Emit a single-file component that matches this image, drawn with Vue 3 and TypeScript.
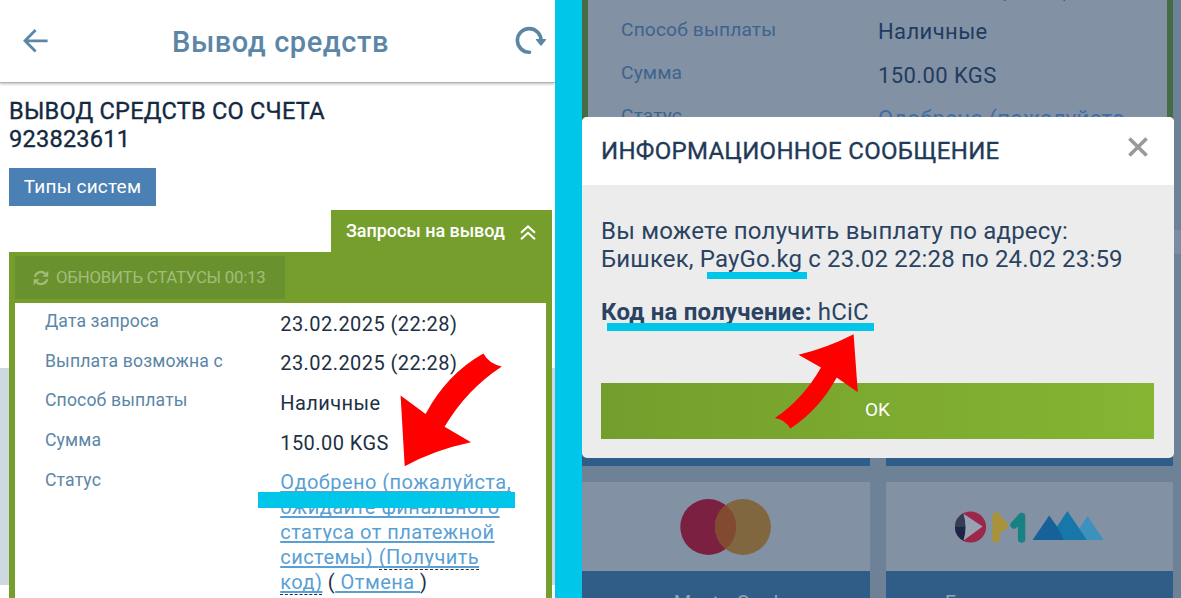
<script setup lang="ts">
interface Row {
  label: string
  value: string
}

const requestRows: Row[] = [
  { label: 'Дата запроса', value: '23.02.2025 (22:28)' },
  { label: 'Выплата возможна с', value: '23.02.2025 (22:28)' },
  { label: 'Способ выплаты', value: 'Наличные' },
  { label: 'Сумма', value: '150.00 KGS' },
]

const backdropRows: Row[] = [
  { label: 'Выплата возможна с', value: '23.02.2025 (22:28)' },
  { label: 'Способ выплаты', value: 'Наличные' },
  { label: 'Сумма', value: '150.00 KGS' },
]
</script>

<template>
  <main class="stage">
    <section class="phone">
      <header class="bar">
        <svg class="back" width="26" height="26" viewBox="0 0 26 26">
          <path d="M12.6 2 L2 12.8 L12.6 23.6 M2 12.8 H24.6" fill="none" stroke="#5b86a6" stroke-width="2.8" />
        </svg>
        <h1 class="bar-title">Вывод средств</h1>
        <svg class="reload" width="34" height="32" viewBox="0 0 34 32">
          <path d="M15.5 27.2 A11.8 11.8 0 1 1 27 15.8" fill="none" stroke="#5b86a6" stroke-width="3.6" stroke-linecap="round" />
          <path d="M22.6 14.6 H31.4 L27 20 Z" fill="#5b86a6" stroke="#5b86a6" stroke-width="1.4" stroke-linejoin="round" />
        </svg>
      </header>

      <h2 class="account">ВЫВОД СРЕДСТВ СО СЧЕТА<br />923823611</h2>
      <button class="types">Типы систем</button>

      <div class="tab-line">
        <div class="tab">
          <span class="tab-text">Запросы на вывод</span>
          <svg class="chevrons" width="18" height="17" viewBox="0 0 18 17">
            <path d="M2 8.8 L9 2.4 L16 8.8 M2 15.2 L9 8.8 L16 15.2" fill="none" stroke="#fff" stroke-width="2.1" />
          </svg>
        </div>
      </div>

      <div class="track">
        <div class="requests">
          <div class="refresh">
            <svg width="16" height="16" viewBox="0 0 16 16">
              <path d="M1.8 6.8 A6.2 6.2 0 0 1 12.3 3.8 M14.2 9.2 A6.2 6.2 0 0 1 3.7 12.2" fill="none" stroke="#a3bc7c" stroke-width="2.1" />
              <path d="M15.3 0.8 V6.8 H9.3 Z M0.7 15.2 V9.2 H6.7 Z" fill="#a3bc7c" />
            </svg>
            <span class="refresh-text">ОБНОВИТЬ СТАТУСЫ 00:13</span>
          </div>
          <div class="sheet">
            <div v-for="row in requestRows" :key="row.label" class="row">
              <span class="label">{{ row.label }}</span>
              <span class="value">{{ row.value }}</span>
            </div>
            <div class="row">
              <span class="label">Статус</span>
              <span class="value status"><a>Одобрено (пожалуйста,<br />ожидайте финального<br />статуса от платежной<br />системы) </a><a class="dashed">(Получить<br />код)</a> (<a> Отмена </a>)</span>
            </div>
          </div>
        </div>
      </div>

      <div class="marker status-marker"></div>
      <svg class="arrow arrow-status" width="104" height="116" viewBox="400 352 104 116">
        <path d="M404.7 466.2 L400.6 395.6 L425.6 414 Q447 374 483.4 353.6 Q489 364 501.8 366.4 Q466 390 444.6 426.8 L471 442.2 Q434 450 404.7 466.2 Z" fill="#fe0000" />
      </svg>
    </section>

    <div class="divider"></div>

    <section class="phone dimmed">
      <div class="back-sheet">
        <div v-for="row in backdropRows" :key="row.label" class="back-row">
          <span class="back-label">{{ row.label }}</span>
          <span class="back-value">{{ row.value }}</span>
        </div>
        <div class="back-row">
          <span class="back-label">Статус</span>
          <span class="back-value back-link">Одобрено (пожалуйста,</span>
        </div>
      </div>
      <div class="edge"></div>

      <div class="tiles">
        <div class="tile-foot"></div>
        <div class="tile-foot"></div>
        <div class="tile">
          <div class="logo">
            <svg width="94" height="58" viewBox="0.5 0 94 58">
              <circle cx="29.8" cy="29" r="28" fill="#7b2041" />
              <circle cx="64.4" cy="29" r="28" fill="#806740" />
              <path d="M47.1 7 A28 28 0 0 1 47.1 51 A28 28 0 0 1 47.1 7 Z" fill="#814a31" />
            </svg>
          </div>
          <div class="caption">MasterCard</div>
        </div>
        <div class="tile">
          <div class="logo">
            <svg width="152" height="36" viewBox="954 509 152 36">
              <circle cx="970.5" cy="527" r="15.6" fill="#9c2748" />
              <path d="M964 513 A15.6 15.6 0 0 0 955 527 H966 Z" fill="#343c56" />
              <path d="M955 527 A15.6 15.6 0 0 0 964 541 L966 527 Z" fill="#1c2546" />
              <path d="M963.5 513.8 L982.6 526.5 L963.5 540.6 Q967.6 527 963.5 513.8 Z" fill="#98a2b4" />
              <path d="M996 539 V516 L1004.4 525.4 L998 530" fill="none" stroke="#a8933a" stroke-width="7.4" stroke-linecap="round" stroke-linejoin="round" />
              <path d="M1021.6 539 V516.4 L1014 525" fill="none" stroke="#178183" stroke-width="7.4" stroke-linecap="round" stroke-linejoin="round" />
              <path d="M1072 540 L1087.4 516 L1103.6 540 Z" fill="#3c92bd" />
              <path d="M1048 540 L1067.4 511 L1087 540 Z" fill="#1777ab" />
              <path d="M1032.6 540 L1049.2 515.6 L1057 526.5 L1064 540 Z" fill="#17619b" />
            </svg>
          </div>
          <div class="caption">Банковская карта</div>
        </div>
      </div>

      <div class="modal">
        <div class="modal-head">
          <h3 class="modal-title">ИНФОРМАЦИОННОЕ СООБЩЕНИЕ</h3>
          <svg class="close" width="20" height="20" viewBox="0 0 20 20">
            <path d="M1.4 1.4 L18.6 18.6 M18.6 1.4 L1.4 18.6" stroke="#999" stroke-width="3.6" />
          </svg>
        </div>
        <div class="modal-body">
          <p class="message"><span>Вы можете получить выплату по адресу:</span><br /><span class="line-two">Бишкек, PayGo.kg с 23.02 22:28 по 24.02 23:59</span></p>
          <p class="message code"><b>Код на получение:</b> hCiC</p>
          <button class="ok">OK</button>
        </div>
      </div>

      <div class="marker pay-marker"></div>
      <div class="marker code-marker"></div>
      <svg class="arrow arrow-code" width="86" height="98" viewBox="774 332 86 98">
        <path d="M853.6 334.2 L857.8 392.2 L836.7 377.6 Q819 410 790.3 428.6 Q785 419.5 774.8 418 Q803 399 821 367.4 L798.4 354.8 Q828 347.5 853.6 334.2 Z" fill="#fe0000" />
      </svg>
    </section>
  </main>
</template>

<style>
body {
  margin: 0;
  overflow: hidden;
}
</style>

<style scoped>
.stage {
  display: flex;
  width: 1181px;
  height: 598px;
  overflow: hidden;
  background: #fff;
  font-family: Roboto, "Noto Sans", sans-serif;
}
h1, h2, h3, p { margin: 0; }
button { border: 0; padding: 0; font-family: inherit; display: block; }
svg { display: block; flex: none; }
.phone {
  position: relative;
  width: 555px;
  height: 598px;
  overflow: hidden;
  flex: none;
}
.bar {
  height: 82px;
  display: flex;
  align-items: center;
  border-bottom: 1px solid #b4b4b4;
  box-shadow: 0 1px 3px #bbb;
}
.back { margin: 0 0 1px 23px; }
.bar-title {
  width: 222px;
  margin-left: 123px;
  padding-top: 1px;
  font-size: 29px;
  line-height: 40px;
  font-weight: 500;
  letter-spacing: 0.58px;
  color: #5b86a6;
  white-space: nowrap;
}
.reload { margin-left: 120px; margin-bottom: 1px; }
.account {
  margin: 14px 0 0 9px;
  font-size: 23.6px;
  line-height: 28px;
  font-weight: 400;
  letter-spacing: 0.21px;
  color: #14293f;
  -webkit-text-stroke: 0.35px #14293f;
}
.types {
  width: 147px;
  height: 38px;
  margin: 15px 0 0 9px;
  background: #4a80b3;
  color: #fff;
  font-size: 19px;
  line-height: 38px;
  letter-spacing: 0.2px;
}
.tab-line {
  display: flex;
  justify-content: flex-end;
  margin: 4px 3px 0 0;
}
.tab {
  width: 221px;
  height: 42px;
  box-sizing: border-box;
  padding: 0 15px;
  display: flex;
  align-items: center;
  justify-content: space-between;
  background: #759e2d;
}
.tab-text {
  color: #fff;
  font-size: 18px;
  font-weight: 500;
  line-height: 40px;
  letter-spacing: -0.05px;
  padding-bottom: 1px;
}
.chevrons { margin-top: 2px; }
.track {
  padding: 0 3px 0 9px;
  background: linear-gradient(#cdd8df, #cdd8df) 0 116px / 100% 217px no-repeat;
}
.requests {
  height: 346px;
  box-sizing: border-box;
  padding: 4px 6px 0;
  background: #759e2d;
}
.refresh {
  width: 270px;
  height: 43px;
  box-sizing: border-box;
  padding-left: 18px;
  display: flex;
  align-items: center;
  gap: 7px;
  background: #69922f;
}
.refresh-text {
  font-size: 16.8px;
  line-height: 41px;
  padding-bottom: 1px;
  letter-spacing: -0.22px;
  color: #a3bc7c;
  white-space: nowrap;
}
.sheet {
  height: 295px;
  margin-top: 4px;
  box-sizing: border-box;
  padding: 6px 0 0 30px;
  background: #fff;
}
.row {
  display: grid;
  grid-template-columns: 235.2px 1fr;
  height: 39.7px;
}
.label {
  font-size: 17.6px;
  line-height: 24px;
  letter-spacing: 0.14px;
  color: #5b86a6;
}
.value {
  padding-top: 2.6px;
  font-size: 20px;
  line-height: 24.8px;
  letter-spacing: 0.45px;
  color: #1d3044;
  white-space: nowrap;
}
.status { letter-spacing: 0.47px; }
.status a {
  color: #5a9fd4;
  text-decoration: underline;
  text-decoration-thickness: 1.5px;
  text-underline-offset: 2px;
  text-decoration-skip-ink: none;
}
.status .dashed {
  border-bottom: 1px dashed #1d3044;
}
.marker { position: absolute; background: #00c7ea; }
.arrow { position: absolute; }
.status-marker { left: 258px; top: 492px; width: 257px; height: 16px; }
.arrow-status { left: 400px; top: 352px; }
.divider { width: 27px; flex: none; background: #00c7ea; }

.dimmed { width: 599px; background: #6d8297; }
.back-sheet {
  width: 591px;
  height: 300px;
  margin-top: -27px;
  box-sizing: border-box;
  padding-left: 33px;
  border: solid #466c45;
  border-width: 0 6px;
  background: #8391a4;
}
.back-row {
  display: grid;
  grid-template-columns: 257px 1fr;
  height: 43.3px;
}
.back-label {
  padding-top: 0.4px;
  font-size: 19.2px;
  line-height: 26px;
  letter-spacing: 0.14px;
  color: #3d648c;
}
.back-value {
  padding-top: 3px;
  font-size: 22px;
  line-height: 26px;
  letter-spacing: 0.4px;
  color: #1f3c60;
  white-space: nowrap;
}
.back-value.back-link { color: #3c6ea6; }
.edge {
  position: absolute;
  left: 591px;
  top: 230px;
  width: 8px;
  height: 24px;
  background: #7b8ca2;
}
.tiles {
  display: grid;
  grid-template-columns: 288px 287px;
  column-gap: 16px;
  margin-top: 179px;
}
.tile-foot { height: 14px; background: #2f5d87; margin-bottom: 16px; }
.logo {
  height: 89px;
  display: flex;
  justify-content: center;
  align-items: center;
  background: #8391a4;
}
.caption {
  height: 27px;
  box-sizing: border-box;
  padding-top: 20px;
  overflow: hidden;
  background: #2f5d87;
  color: #93a3b6;
  font-size: 20px;
  line-height: 24px;
  text-align: center;
  white-space: nowrap;
}
.modal {
  position: absolute;
  left: 0;
  top: 117px;
  width: 592px;
  height: 341px;
  border-radius: 5px;
  overflow: hidden;
  background: #ececec;
}
.modal-head {
  height: 67.5px;
  box-sizing: border-box;
  padding: 0 26px 0 19px;
  display: flex;
  align-items: center;
  justify-content: space-between;
  background: #fff;
}
.modal-title {
  font-size: 24px;
  font-weight: 400;
  line-height: 34px;
  letter-spacing: 0.3px;
  color: #1f3a57;
  -webkit-text-stroke: 0.35px #1f3a57;
  white-space: nowrap;
}
.close { margin-bottom: 7px; }
.modal-body { padding: 32.5px 20px 0 19px; }
.message {
  font-size: 24px;
  line-height: 28.4px;
  letter-spacing: 0.2px;
  color: #2a4362;
  white-space: nowrap;
}
.line-two { letter-spacing: 0.16px; }
.code { margin-top: 24px; }
.ok {
  width: 553px;
  height: 55.5px;
  margin-top: 57px;
  box-sizing: border-box;
  padding-bottom: 2px;
  background: linear-gradient(90deg, #749e2c, #85b533);
  color: #fff;
  font-size: 19px;
  line-height: 52px;
}
.pay-marker { left: 125px; top: 272px; width: 100px; height: 7px; }
.code-marker { left: 25px; top: 323px; width: 267px; height: 8px; }
.arrow-code { left: 192px; top: 332px; }
</style>
